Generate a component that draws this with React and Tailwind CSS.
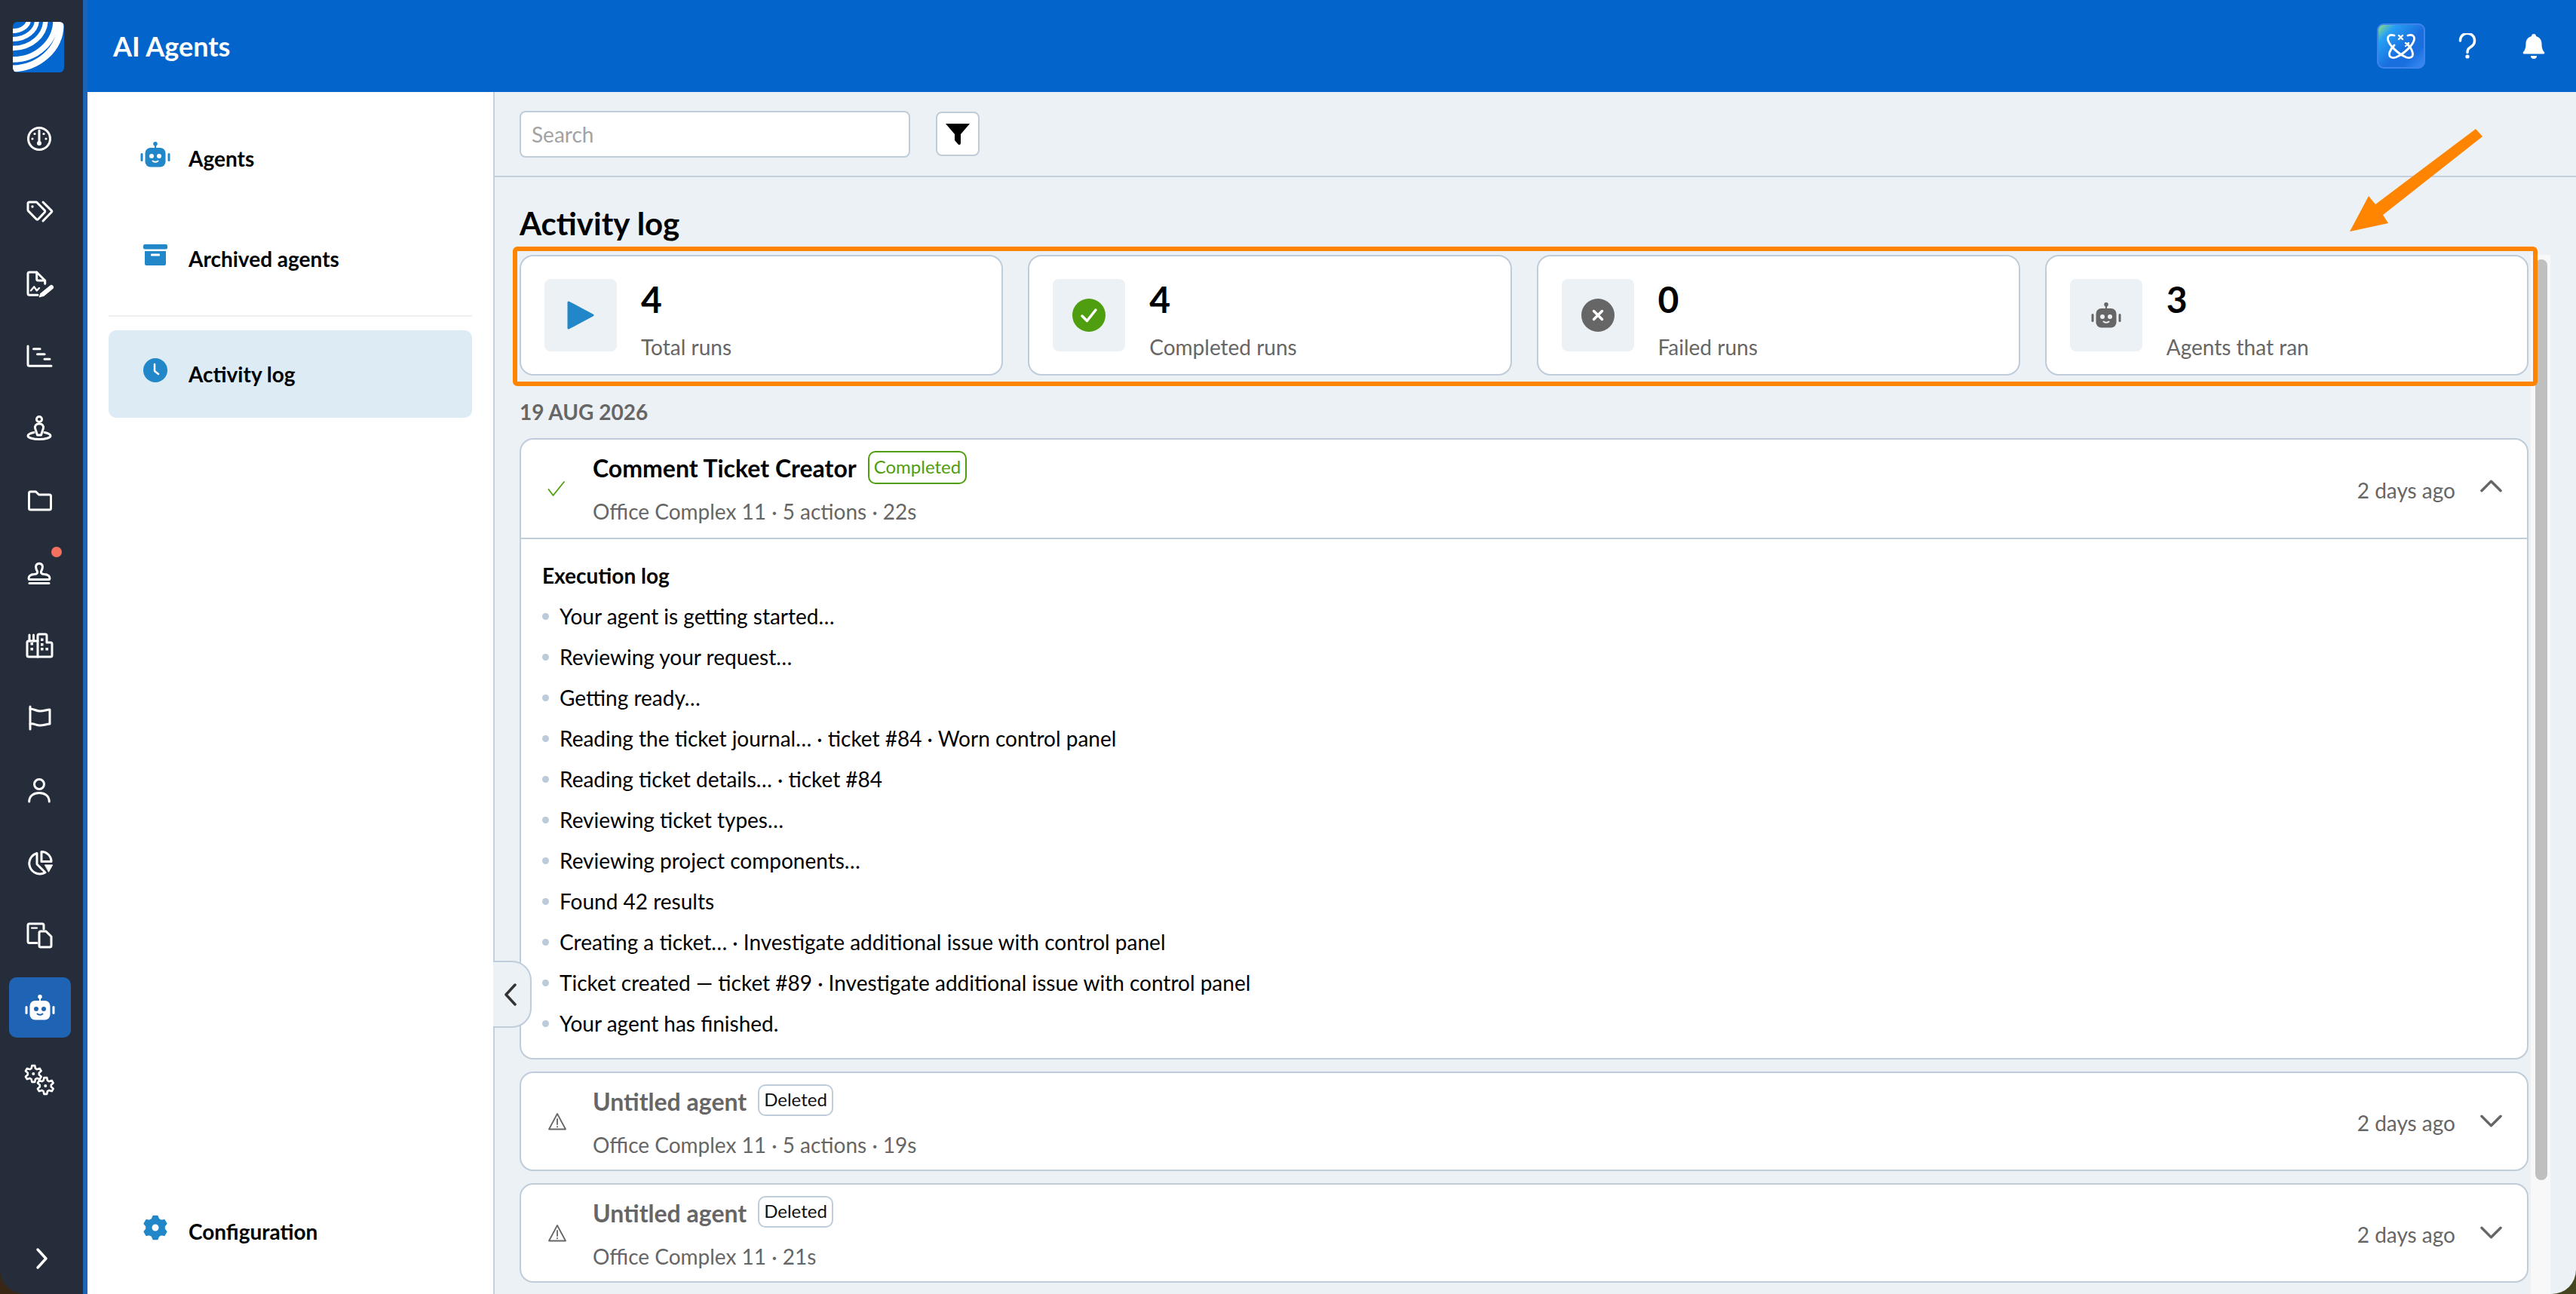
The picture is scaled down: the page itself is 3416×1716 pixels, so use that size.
import React from 'react';

const gearPath = (cx, cy, R, r) => {
  // six toothed gear outline
  const pts = [];
  for (let i = 0; i < 6; i++) {
    const a = (Math.PI / 3) * i - Math.PI / 2;
    const w = 0.27;
    pts.push([a - w * 1.35, r], [a - w * 0.65, R], [a + w * 0.65, R], [a + w * 1.35, r]);
  }
  return pts
    .map(([a, d], i) => `${i ? 'L' : 'M'}${(cx + Math.cos(a) * d).toFixed(2)} ${(cy + Math.sin(a) * d).toFixed(2)}`)
    .join(' ') + ' Z';
};

const Line = ({ children }) => (
  <svg width="40" height="40" viewBox="0 0 40 40" fill="none" stroke="#fff" strokeWidth="3" strokeLinecap="round" strokeLinejoin="round">
    {children}
  </svg>
);

const Robot = ({ color, cut, className }) => (
  <svg viewBox="0 0 40 34" className={className}>
    <circle cx="20" cy="2.8" r="2.8" fill={color} />
    <rect x="19" y="3" width="2" height="6" fill={color} />
    <rect x="6.5" y="8" width="27" height="25.5" rx="7" fill={color} />
    <rect x="0.5" y="15" width="3" height="11" rx="1.5" fill={color} />
    <rect x="36.5" y="15" width="3" height="11" rx="1.5" fill={color} />
    <circle cx="15" cy="19" r="3" fill={cut} />
    <circle cx="25" cy="19" r="3" fill={cut} />
    <path d="M16.5 25.5q3.5 2.6 7 0" stroke={cut} strokeWidth="2" fill="none" strokeLinecap="round" />
  </svg>
);

const railIcons = [
  <Line key="gauge">
    <circle cx="19" cy="20" r="14.5" />
    <path d="M19 9v15" />
    <circle cx="13" cy="13.5" r="1.6" fill="#fff" stroke="none" />
    <circle cx="25" cy="13.5" r="1.6" fill="#fff" stroke="none" />
    <circle cx="10" cy="20" r="1.6" fill="#fff" stroke="none" />
    <circle cx="28" cy="20" r="1.6" fill="#fff" stroke="none" />
    <circle cx="19" cy="26" r="3" fill="#fff" stroke="none" />
  </Line>,
  <Line key="tags">
    <path d="M6 8h9.5l11 11.2a1.6 1.6 0 0 1 0 2.1l-9 9.4a1.6 1.6 0 0 1-2.2 0L4.4 19.6a1.5 1.5 0 0 1-.4-1V10a2 2 0 0 1 2-2z" />
    <circle cx="10" cy="14" r="1.7" fill="#fff" stroke="none" />
    <path d="M24 8l11.6 11.6a1 1 0 0 1 0 1.4L24 33" />
  </Line>,
  <Line key="file">
    <path d="M17 35.3H6a2 2 0 0 1-2-2V7a2 2 0 0 1 2-2h9.7l11 11v4.3" />
    <path d="M15.7 5v9a2 2 0 0 0 2 2h9" />
    <path d="M8 29.3l4.3-5 3.4 5 3.3-3.3" strokeWidth="2.4" />
    <path d="M35 25L24 34" strokeWidth="6" />
    <path d="M21 33l-2 5 5-1.5z" fill="#fff" strokeWidth="1" />
  </Line>,
  <Line key="chart">
    <path d="M4 7v24.3a2 2 0 0 0 2 2h29" />
    <path d="M11.5 10.7h8.6M16.5 17.7h9.6M26 24.3h7" />
  </Line>,
  <Line key="pin">
    <circle cx="19" cy="8" r="3.6" />
    <path d="M19 14c-4.2 0-6.4 3-5.3 6.4l2.8 8.6h5l2.8-8.6C25.4 17 23.2 14 19 14z" />
    <path d="M12 25.5C7 26.5 4 28 4 30c0 2.6 7 4.5 15 4.5S34 32.6 34 30c0-2-3-3.5-8-4.5" />
  </Line>,
  <Line key="folder">
    <path d="M5.5 10a2 2 0 0 1 2-2h7l4 4h14a2 2 0 0 1 2 2v16a2 2 0 0 1-2 2h-25a2 2 0 0 1-2-2z" />
  </Line>,
  <Line key="stamp">
    <path d="M5.5 28.5c-1.5-4 1.5-7 7.5-7 3 0 4.3-2 3.2-4.3C14.5 14 14 12 15 9.5a4.6 4.6 0 0 1 8 0c1 2.5.5 4.5-1.2 7.7-1.1 2.3.2 4.3 3.2 4.3 6 0 9 3 7.5 7z" />
    <path d="M6 33.5h26" />
  </Line>,
  <Line key="building">
    <path d="M3 16a2 2 0 0 1 2-2h12V7a2 2 0 0 1 2-2h8a2 2 0 0 1 2 2v9h5a2 2 0 0 1 2 2v15a2 2 0 0 1-2 2H5a2 2 0 0 1-2-2z" />
    <path d="M17 14v21M6 6v8M11.5 6v8" />
    <g fill="#fff" stroke="none">
      <rect x="7.5" y="16" width="3.5" height="3.5" />
      <rect x="7.5" y="23" width="3.5" height="3.5" />
      <rect x="21" y="10.5" width="3.5" height="3.5" />
      <rect x="21" y="17" width="3.5" height="3.5" />
      <rect x="21" y="23" width="3.5" height="3.5" />
      <rect x="27.5" y="23" width="3.5" height="3.5" />
    </g>
  </Line>,
  <Line key="flag">
    <path d="M7 5v30" />
    <path d="M7 8c5 0 8 3 13 3s9-2 13-2v19c-4 0-8 2-13 2s-8-3-13-2" />
  </Line>,
  <Line key="user">
    <circle cx="19" cy="12" r="6.5" />
    <path d="M5.7 35c0-7.5 6-11.5 13.3-11.5S32.3 27.5 32.3 35" />
  </Line>,
  <Line key="pie">
    <path d="M16 7.5A14 14 0 1 0 27 33L16 22z" />
    <path d="M22 5.5a13 13 0 0 1 13 13H22z" />
    <path d="M26.7 23h10l-5 9z" fill="#fff" stroke="#fff" strokeWidth="1" />
  </Line>,
  <Line key="docs">
    <path d="M16 30.5H6a2 2 0 0 1-2-2V7a2 2 0 0 1 2-2h17a2 2 0 0 1 2 2v5" />
    <path d="M9 10.7h7" strokeWidth="2.2" />
    <path d="M19 17a2 2 0 0 1 2-2h7l7 7v12a2 2 0 0 1-2 2H21a2 2 0 0 1-2-2z" />
  </Line>,
  <Robot key="robot" color="#fff" cut="#1f63b5" className="w-[40px] h-[34px]" />,
  <svg key="gears" width="40" height="40" viewBox="0 0 40 40" fill="none" stroke="#fff" strokeWidth="2.6" strokeLinejoin="round" className="overflow-visible">
    <path d={gearPath(11.3, 12, 11, 7.6)} />
    <circle cx="11.3" cy="12" r="2" fill="#fff" stroke="none" />
    <path d={gearPath(27.3, 28, 11, 7.6)} />
    <circle cx="27.3" cy="28" r="2" fill="#fff" stroke="none" />
  </svg>,
];

const Logo = () => (
  <svg viewBox="0 0 68 67" className="w-[68px] h-[67px] rounded-[6px] bg-[#0367cf]" fill="none" stroke="#fff">
    <ellipse cx="0" cy="-3" rx="21" ry="15" strokeWidth="6" />
    <ellipse cx="0" cy="-3" rx="32" ry="26" strokeWidth="6" />
    <ellipse cx="0" cy="-3" rx="43.5" ry="38" strokeWidth="6.5" />
    <ellipse cx="0" cy="-2" rx="57" ry="52" strokeWidth="7.5" />
    <ellipse cx="-2" cy="4" rx="65" ry="58" strokeWidth="9" />
  </svg>
);

const Rail = () => (
  <div className="w-[116px] shrink-0 h-full bg-[#252d3a] border-r-[6px] border-[#1f63b5] rounded-bl-[32px] flex flex-col">
    <div className="pt-[29px] pl-[17px] h-[136px]">
      <Logo />
    </div>
    {railIcons.map((icon, i) => (
      <div key={i} className={`relative ml-3 w-[82px] flex items-center justify-center ${i === 12 ? 'h-[80px] my-2 bg-[#1f63b5] rounded-[10px]' : 'h-24'}`}>
        {icon}
        {i === 6 && <span className="absolute left-[56px] top-[13px] w-[14px] h-[14px] rounded-full bg-[#f4705f]" />}
      </div>
    ))}
    <div className="mt-auto h-[96px] pl-[45px] pt-[33px]">
      <svg width="24" height="32" viewBox="0 0 24 32" fill="none" stroke="#fff" strokeWidth="3.5" strokeLinecap="round" strokeLinejoin="round">
        <path d="M5 4l11 12L5 28" />
      </svg>
    </div>
  </div>
);

const NavItem = ({ icon, label, active }) => (
  <div className={`h-[116px] rounded-[10px] flex items-center pl-[42px] gap-[24px] ${active ? 'bg-[#dcebf4]' : ''}`}>
    <div className="w-[40px] -mt-[10px] flex justify-center">{icon}</div>
    <span className="text-[28px] font-bold text-black">{label}</span>
  </div>
);

const SideNav = () => (
  <div className="w-[540px] shrink-0 h-full bg-white border-r-2 border-[#c3cfdb] px-[28px] pb-[25px] pt-[30px] flex flex-col">
    <div className="flex flex-col gap-[17px]">
      <NavItem label="Agents" icon={<Robot color="#2187c8" cut="#fff" className="w-[40px] h-[34px]" />} />
      <NavItem
        label="Archived agents"
        icon={
          <svg width="32" height="28" viewBox="0 0 32 28" fill="#2187c8">
            <rect x="0" y="0" width="32" height="6.5" rx="2" />
            <path d="M2 9h28v17a2 2 0 0 1-2 2H4a2 2 0 0 1-2-2z" />
            <rect x="10" y="12.5" width="12" height="3" rx="1" fill="#fff" />
          </svg>
        }
      />
    </div>
    <div className="h-[2px] bg-[#efefef] mt-[17px] mb-[18px]" />
    <NavItem
      active
      label="Activity log"
      icon={
        <svg width="32" height="32" viewBox="0 0 32 32">
          <circle cx="16" cy="16" r="16" fill="#2187c8" />
          <path d="M15 8v9l5 4" fill="none" stroke="#fff" strokeWidth="2.5" strokeLinecap="round" strokeLinejoin="round" />
        </svg>
      }
    />
    <div className="mt-auto">
      <NavItem
        label="Configuration"
        icon={
          <svg width="32" height="34" viewBox="0 0 32 34" fill="#2187c8">
            <path fillRule="evenodd" stroke="#2187c8" strokeWidth="2" strokeLinejoin="round" d={`${gearPath(16, 17, 15.5, 12)} M16 11.5a5.5 5.5 0 1 0 0 11a5.5 5.5 0 1 0 0-11z`} />
          </svg>
        }
      />
    </div>
  </div>
);

const TopBar = () => (
  <div className="h-[122px] shrink-0 bg-[#0365cc] flex items-center pl-[34px] text-white">
    <span className="text-[36px] font-bold">AI Agents</span>
    <div className="ml-auto flex items-center">
      <div className="w-[64px] h-[60px] rounded-[9px] border-2 border-[#3f84ea] bg-[linear-gradient(135deg,#8fe07f_0%,#27a0f5_20%,#1a6fdf_55%,#1a6fdf_75%,#3d8cf5_100%)] flex items-center justify-center">
        <svg width="40" height="36" viewBox="0 0 40 36" fill="none" stroke="#fff" strokeWidth="2.8" strokeLinecap="round">
          <path d="M11 4C5 2 1 5 3 11c2 6 12 17 24 22 6 2 10-1 8-7-1-4-4-8-7-11" />
          <path d="M29 4c6-2 10 1 8 7-2 6-12 17-24 22-6 2-10-1-8-7 1-3 3-6 6-9" />
          <path d="M17 4l5 5M22 4l-5 5M26 14l4 4M30 14l-4 4" strokeWidth="2.4" />
        </svg>
      </div>
      <div className="w-[112px] flex justify-center">
        <svg width="24" height="34" viewBox="0 0 24 34" fill="none" stroke="#fff" strokeWidth="3.5" strokeLinecap="round">
          <path d="M2.5 10a9.5 9.5 0 1 1 15 7.5c-3.5 2.5-5.5 3.5-5.5 8" />
          <circle cx="12" cy="31" r="2.6" fill="#fff" stroke="none" />
        </svg>
      </div>
      <div className="w-[32px] ml-[16px] mr-[40px] flex justify-center">
        <svg width="30" height="34" viewBox="0 0 30 34" fill="#fff">
          <path d="M15 1a3 3 0 0 1 3 3c5 1.5 7.5 5 7.500 10 0 6 1.500 9 3.500 11a1.500 1.500 0 0 1-1 2.500H2a1.500 1.500 0 0 1-1-2.500c2-2 3.500-5 3.500-11 0-5 2.500-8.500 7.500-10a3 3 0 0 1 3-3z" />
          <path d="M11 30h8a4 4 0 0 1-8 0z" />
        </svg>
      </div>
    </div>
  </div>
);

const stats = [
  {
    label: 'Total runs',
    value: 4,
    icon: (
      <svg width="36" height="40" viewBox="0 0 36 40">
        <path d="M2 3l32 17L2 37z" fill="#2187c8" stroke="#2187c8" strokeWidth="3" strokeLinejoin="round" />
      </svg>
    ),
  },
  {
    label: 'Completed runs',
    value: 4,
    icon: (
      <svg width="44" height="44" viewBox="0 0 44 44">
        <circle cx="22" cy="22" r="22" fill="#4f9e0f" />
        <path d="M13 23l6.5 6.5L31 15" fill="none" stroke="#fff" strokeWidth="3.5" strokeLinecap="round" strokeLinejoin="round" />
      </svg>
    ),
  },
  {
    label: 'Failed runs',
    value: 0,
    icon: (
      <svg width="44" height="44" viewBox="0 0 44 44">
        <circle cx="22" cy="22" r="22" fill="#666" />
        <path d="M16.5 16.5l11 11M27.5 16.5l-11 11" fill="none" stroke="#fff" strokeWidth="3.5" strokeLinecap="round" />
      </svg>
    ),
  },
  {
    label: 'Agents that ran',
    value: 3,
    icon: <Robot color="#666" cut="#ecf1f5" className="w-[40px] h-[34px]" />,
  },
];

const StatCard = ({ label, value, icon }) => (
  <div className="h-[160px] bg-white border-2 border-[#bfccda] rounded-[18px] pl-[31px] flex items-center gap-[32px]">
    <div className="w-[96px] h-[96px] rounded-[8px] bg-[#ecf1f5] flex items-center justify-center">{icon}</div>
    <div className="self-start pt-[29px] flex flex-col">
      <span className="text-[48px] leading-[56px] font-bold text-black">{value}</span>
      <span className="text-[28px] leading-[36px] mt-[17px] text-[#666]">{label}</span>
    </div>
  </div>
);

const Chevron = ({ up }) => (
  <svg width="30" height="18" viewBox="0 0 30 18" fill="none" stroke="#666" strokeWidth="3.5" strokeLinecap="round" strokeLinejoin="round" className={up ? '-mt-[8px]' : ''}>
    <path d={up ? 'M2 16L15 3l13 13' : 'M2 2l13 13L28 2'} />
  </svg>
);

const CheckMark = () => (
  <svg width="24" height="22" viewBox="0 0 24 22" fill="none" stroke="#4f9e0f" strokeWidth="1.8" strokeLinecap="round" strokeLinejoin="round">
    <path d="M1.5 12l6 8L22 2" />
  </svg>
);

const WarnMark = () => (
  <svg width="26" height="24" viewBox="0 0 26 24" fill="none" stroke="#666" strokeWidth="1.8" strokeLinejoin="round" strokeLinecap="round">
    <path d="M13 2L2 22.5h22z" />
    <path d="M13 9v7M13 18.8v.6" />
  </svg>
);

const RunHeader = ({ icon, name, muted, badge, sub, up }) => (
  <div className={`flex items-center ${up ? 'h-[130px]' : 'h-[128px]'}`}>
    <div className="w-[95px] pl-[35px] flex">{icon}</div>
    <div className="self-start pt-[15px] flex flex-col">
      <div className="flex items-start gap-[15px]">
        <span className={`text-[32px] leading-[48px] -mt-[1px] font-bold ${muted ? 'text-[#666]' : 'text-black'}`}>{name}</span>
        {badge}
      </div>
      <span className="text-[28px] leading-[36px] mt-[15px] text-[#666]">{sub}</span>
    </div>
    <span className="ml-auto text-[28px] text-[#666] mt-[3px]">2 days ago</span>
    <div className="w-[29px] ml-[33px] mr-[33px] flex justify-center">
      <Chevron up={up} />
    </div>
  </div>
);

const logItems = [
  'Your agent is getting started…',
  'Reviewing your request…',
  'Getting ready…',
  'Reading the ticket journal… · ticket #84 · Worn control panel',
  'Reading ticket details… · ticket #84',
  'Reviewing ticket types…',
  'Reviewing project components…',
  'Found 42 results',
  'Creating a ticket… · Investigate additional issue with control panel',
  'Ticket created — ticket #89 · Investigate additional issue with control panel',
  'Your agent has finished.',
];

const DeletedBadge = () => (
  <span className="h-[42px] px-[6px] border-2 border-[#bfccda] rounded-[10px] text-[24px] leading-[36px] text-[#111]">Deleted</span>
);

const ActivityList = () => (
  <div className="flex flex-col gap-[16px]">
    <div className="bg-white border-2 border-[#bfccda] rounded-[18px]">
      <RunHeader
        up
        icon={<CheckMark />}
        name="Comment Ticket Creator"
        sub="Office Complex 11 · 5 actions · 22s"
        badge={
          <span className="h-[44px] px-[6px] border-2 border-[#4f9e0f] rounded-[10px] text-[24px] leading-[38px] text-[#4f9e0f]">Completed</span>
        }
      />
      <div className="border-t-2 border-[#bfccda] pl-[28px] pt-[21px] pb-[19px]">
        <div className="h-[54px] flex items-center text-[28px] font-bold text-black">Execution log</div>
        {logItems.map((item) => (
          <div key={item} className="h-[54px] flex items-center gap-[14px] text-[28px] text-black">
            <span className="w-[9px] h-[9px] rounded-full bg-[#bccbd9]" />
            {item}
          </div>
        ))}
      </div>
    </div>
    <div className="bg-white border-2 border-[#bfccda] rounded-[18px]">
      <RunHeader muted icon={<WarnMark />} name="Untitled agent" sub="Office Complex 11 · 5 actions · 19s" badge={<DeletedBadge />} />
    </div>
    <div className="bg-white border-2 border-[#bfccda] rounded-[18px]">
      <RunHeader muted icon={<WarnMark />} name="Untitled agent" sub="Office Complex 11 · 21s" badge={<DeletedBadge />} />
    </div>
  </div>
);

const Main = () => (
  <div className="relative flex-1 min-w-0 h-full bg-[#ecf1f5] rounded-br-[32px] flex flex-col">
    <div className="h-[113px] shrink-0 border-b-2 border-[#c3cfdb] pl-[33px] flex items-center gap-[34px]">
      <input
        placeholder="Search"
        className="w-[518px] h-[62px] px-[14px] bg-white border-2 border-[#bfccda] rounded-[8px] text-[28px] placeholder:text-[#a3a3a3] outline-none"
      />
      <button className="w-[58px] h-[59px] bg-white border-2 border-[#bfccda] rounded-[8px] flex items-center justify-center">
        <svg width="32" height="28" viewBox="0 0 32 28" fill="#000">
          <path d="M0 0h32L20 14v12a2 2 0 0 1-3.5 1.3L12 22v-8z" />
        </svg>
      </button>
    </div>
    <div className="h-[103px] shrink-0 pl-[33px] pt-[19px] flex items-center">
      <h1 className="text-[42px] font-bold text-black">Activity log</h1>
    </div>
    <div className="flex-1 min-h-0 flex">
      <div className="w-[2664px] ml-[33px] flex flex-col">
        <div className="relative grid grid-cols-4 gap-[33px]">
          {stats.map((s) => (
            <StatCard key={s.label} {...s} />
          ))}
          {/* orange annotation frame */}
          <div className="absolute -left-[9px] -right-[12px] -top-[11px] -bottom-[14px] border-[6px] border-[#ff8500] rounded-[6px]" />
        </div>
        <div className="h-[83px] pt-[13px] flex items-center text-[28px] font-bold text-[#666]">19 AUG 2026</div>
        <ActivityList />
      </div>
      <div className="ml-[3px] w-[26px] bg-[#f8f8f8] pt-[6px] pl-[6px]">
        <div className="w-[16px] h-[1221px] rounded-full bg-[#bfbfbf]" />
      </div>
    </div>
    {/* sidebar collapse handle */}
    <div className="absolute -left-[2px] top-[1152px] w-[51px] h-[89px] bg-[#ecf1f5] border-2 border-l-0 border-[#bfccda] rounded-r-[26px] flex items-center pl-[13px]">
      <svg width="20" height="30" viewBox="0 0 20 30" fill="none" stroke="#333" strokeWidth="3.5" strokeLinecap="round" strokeLinejoin="round">
        <path d="M16 2L4 15l12 13" />
      </svg>
    </div>
  </div>
);

export default function App() {
  return (
    <div className="relative w-screen h-screen overflow-hidden bg-[linear-gradient(90deg,#3a2614,#454520)] font-[family-name:Lato,sans-serif] flex">
      <Rail />
      <div className="flex-1 min-w-0 h-full flex flex-col">
        <TopBar />
        <div className="flex-1 min-h-0 flex">
          <SideNav />
          <Main />
        </div>
      </div>
      {/* orange annotation arrow */}
      <svg width="190" height="150" viewBox="0 0 190 150" className="absolute left-[3110px] top-[165px]">
        <polygon points="173,6 182,16 50,120 57,131 6,142 31,95 40,106" fill="#ff8500" />
      </svg>
    </div>
  );
}
